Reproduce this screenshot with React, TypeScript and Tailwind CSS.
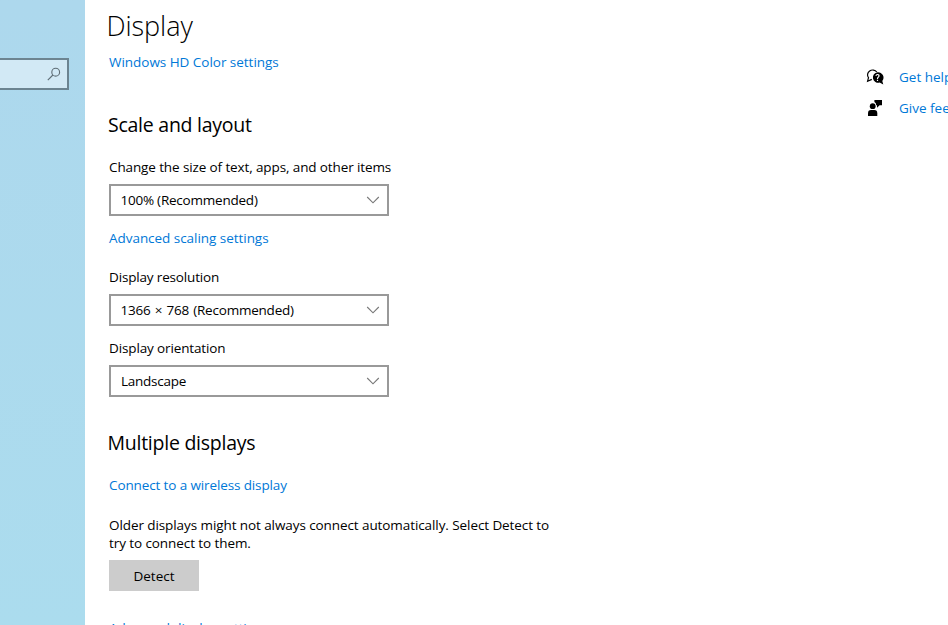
import React from "react";

function Chevron() {
  return (
    <svg width="14" height="8" viewBox="0 0 14 8" fill="none" stroke="#777" strokeWidth="1.1">
      <path d="M1.2 1 L7 6.8 L12.8 1" />
    </svg>
  );
}

function Select({ value, className }: { value: string; className: string }) {
  return (
    <button className="flex h-8 w-[280px] shrink-0 items-center justify-between border-2 border-[#999] bg-white pr-[7px] text-left">
      <span className={`whitespace-nowrap ${className}`}>{value}</span>
      <Chevron />
    </button>
  );
}

function Line({ children, className }: { children: React.ReactNode; className: string }) {
  return (
    <div className={`flex h-5 shrink-0 ${className}`}>
      <span className="whitespace-nowrap">{children}</span>
    </div>
  );
}

export default function App() {
  return (
    <div className="flex h-[625px] w-[948px] overflow-hidden bg-white font-['Open_Sans','Noto_Sans',sans-serif] text-[13.5px] leading-5 text-black">
      <aside className="w-[85px] shrink-0 bg-linear-to-b from-[#add8ed] to-[#abdcee] pt-[58px]">
        <div className="flex h-8 w-[69px] items-center justify-end border-2 border-l-0 border-[#6c8491] bg-[#d2e9f5] pr-[6px]">
          <svg width="14" height="14" viewBox="0 0 14 14" fill="none" stroke="#5d6c75" strokeWidth="1.1">
            <circle cx="8.7" cy="5.2" r="3.9" />
            <path d="M5.9 8 L0.8 13.1" />
          </svg>
        </div>
      </aside>
      <main className="flex w-[770px] shrink-0 flex-col pl-6">
        <h1 className="-ml-[2.5px] flex h-[52px] shrink-0 items-center text-[27px] font-[350] tracking-[-0.05px]">
          <span className="whitespace-nowrap">Display</span>
        </h1>
        <Line className="tracking-[-0.03px] text-[#0078d7]">Windows HD Color settings</Line>
        <h2 className="mt-[39px] -ml-px flex h-[28px] shrink-0 items-center text-[19.5px] tracking-[-0.25px]">
          <span className="whitespace-nowrap">Scale and layout</span>
        </h2>
        <Line className="mt-[18px] tracking-[-0.115px]">Change the size of text, apps, and other items</Line>
        <div className="mt-[7px] flex">
          <Select value="100% (Recommended)" className="pl-[9.4px] tracking-[-0.22px]" />
        </div>
        <Line className="mt-3 tracking-[-0.04px] text-[#0078d7]">Advanced scaling settings</Line>
        <Line className="mt-[19px] tracking-[-0.16px]">Display resolution</Line>
        <div className="mt-[7px] flex">
          <Select value="1366 × 768 (Recommended)" className="pl-[9.4px] tracking-[-0.22px] [word-spacing:1px]" />
        </div>
        <Line className="mt-3 tracking-[-0.13px]">Display orientation</Line>
        <div className="mt-[7px] flex">
          <Select value="Landscape" className="pl-[10px] tracking-[-0.25px]" />
        </div>
        <h2 className="mt-8 -ml-[1.5px] flex h-[28px] shrink-0 items-center text-[19.5px] tracking-[-0.25px]">
          <span className="whitespace-nowrap">Multiple displays</span>
        </h2>
        <Line className="mt-[18px] tracking-[-0.12px] text-[#0078d7]">Connect to a wireless display</Line>
        <div className="mt-[21px] shrink-0 leading-[18px] tracking-[-0.085px]">
          <p className="whitespace-nowrap">Older displays might not always connect automatically. Select Detect to</p>
          <p className="whitespace-nowrap">try to connect to them.</p>
        </div>
        <button className="mt-2 flex h-[31px] w-[90px] shrink-0 items-center justify-center bg-[#ccc]">
          <span>Detect</span>
        </button>
        <Line className="mt-[27px] tracking-[-0.1px] text-[#0078d7]">Advanced display settings</Line>
      </main>
      <nav className="flex w-[93px] shrink-0 flex-col gap-[11px] overflow-hidden pt-[67px] pl-3 text-[#0078d7]">
        <a className="flex h-5 items-center gap-4">
          <svg className="shrink-0 overflow-visible" width="16" height="16" viewBox="0 0 16 16">
            <path d="M4.8 10.4 L0.6 12.2 L1.5 8.6 A4.9 4.6 0 1 1 9.8 3" fill="none" stroke="#000" strokeWidth="1.2" />
            <path d="M10.6 3.2 A5.4 5.3 0 1 0 12.6 13.6 L16.3 15.4 L15.3 11.9 A5.6 5.4 0 0 0 10.6 3.2Z" fill="#000" />
            <path d="M8.9 6.8 Q9.2 5.4 10.6 5.5 Q12.2 5.7 12 7.1 Q11.8 7.8 11 8.4 Q10.5 8.8 10.5 9.9 M10.5 10.8 V12" fill="none" stroke="#fff" strokeWidth="1.2" />
          </svg>
          <span className="whitespace-nowrap">Get help</span>
        </a>
        <a className="flex h-5 items-center gap-4">
          <svg className="shrink-0" width="16" height="16" viewBox="0 0 16 16" fill="#000">
            <circle cx="5.7" cy="6.2" r="2.9" />
            <path d="M1 16 V13.2 Q1 10 4 10 H7.3 Q10.3 10 10.3 13.2 V16Z" />
            <path d="M7.4 0 H15 V5.3 H12.6 L10 7.8 V5.3 H9.2 Q9.3 2.8 7.4 2Z" />
          </svg>
          <span className="whitespace-nowrap">Give feedback</span>
        </a>
      </nav>
    </div>
  );
}
